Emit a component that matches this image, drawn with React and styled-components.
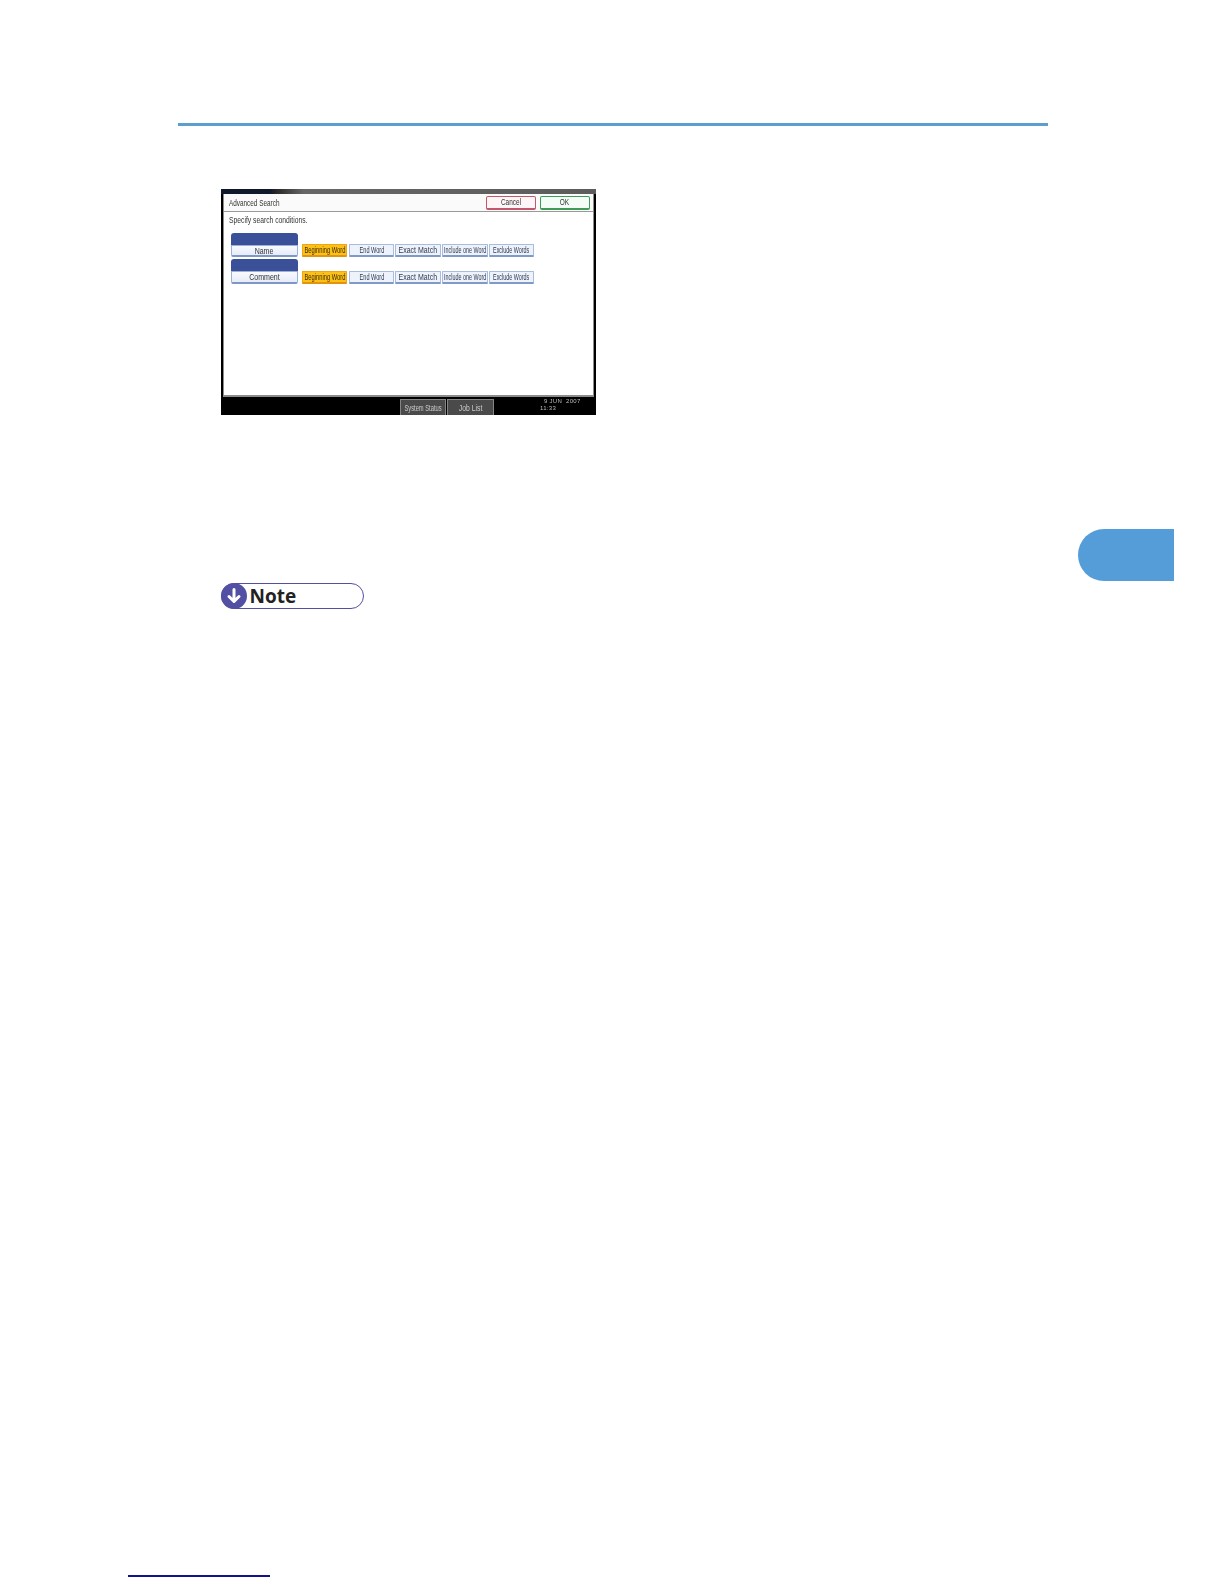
import React from "react";
import styled, { createGlobalStyle } from "styled-components";

const Global = createGlobalStyle`
  html, body { margin: 0; padding: 0; background: #fff; }
  body { font-family: "Liberation Sans", Arial, sans-serif; }
`;

const Page = styled.div`
  width: 1224px;
  height: 1584px;
  display: flex;
  flex-direction: column;
  background: #fff;
  overflow: hidden;
`;

const Rule = styled.div`
  margin: 123px 0 0 178px;
  width: 870px;
  height: 3px;
  background: #5b9fd0;
`;

const Screen = styled.div`
  margin: 63px 0 0 221px;
  width: 375px;
  height: 226px;
  background: #000;
  display: flex;
  flex-direction: column;
  filter: blur(0.4px);
`;

const TopBand = styled.div`
  height: 5px;
  flex: none;
  background: linear-gradient(90deg, #10182c 0, #10182c 13%, #2a2a2a 15%, #666 22%, #5c5c5c 100%);
`;

const Dialog = styled.div`
  flex: none;
  height: 203px;
  margin: 0 2px;
  background: #fff;
  border: 1px solid #8c8c8c;
  border-top: 0;
  border-bottom-width: 2px;
  box-sizing: border-box;
  display: flex;
  flex-direction: column;
`;

const TitleBar = styled.div`
  height: 18px;
  flex: none;
  box-sizing: border-box;
  border-bottom: 1px solid #9a9a9a;
  background: #fafafa;
  display: flex;
  align-items: center;
  justify-content: space-between;
  padding: 0 3px 0 5px;
`;

const Squeezed = styled.span`
  display: inline-block;
  white-space: nowrap;
  transform: scaleX(${p => p.$x});
  transform-origin: ${p => p.$origin || "center"};
`;

const Title = styled.span`
  font-size: 9px;
  color: #333;
`;

const Actions = styled.div`
  display: flex;
  gap: 4px;
`;

const ActionButton = styled.div`
  width: 50px;
  height: 14px;
  box-sizing: border-box;
  border: 1px solid ${p => p.$edge};
  border-bottom-width: 2px;
  border-radius: 2px;
  background: ${p => p.$fill};
  font-size: 9px;
  color: #333;
  display: flex;
  align-items: center;
  justify-content: center;
`;

const Hint = styled.div`
  margin: 4px 0 0 5px;
  font-size: 9px;
  line-height: 9px;
  color: #333;
`;

const Rows = styled.div`
  margin: 8px 0 0 7px;
  display: flex;
  flex-direction: column;
  gap: 2px;
`;

const Row = styled.div`
  display: flex;
  align-items: flex-end;
`;

const Field = styled.div`
  width: 67px;
  margin-right: 4px;
  display: flex;
  flex-direction: column;
`;

const FieldHead = styled.div`
  height: 12px;
  background: #3a5199;
  border-radius: 3px 3px 0 0;
`;

const FieldValue = styled.div`
  height: ${p => p.$h}px;
  box-sizing: border-box;
  background: linear-gradient(#f8fafe, #e6ecf8);
  border: 1px solid #9db0d6;
  border-bottom: 2px solid #7f97c6;
  border-radius: 0 0 2px 2px;
  font-size: 9px;
  color: #333;
  display: flex;
  align-items: center;
  justify-content: center;
`;

const Options = styled.div`
  display: flex;
  gap: 1px;
`;

const Option = styled.div`
  width: ${p => p.$w}px;
  height: 13px;
  margin-right: ${p => p.$gap || 0}px;
  box-sizing: border-box;
  border: 1px solid ${p => (p.$active ? "#eda51a" : "#a9bcdd")};
  border-bottom: 2px solid ${p => (p.$active ? "#e09410" : "#7f9ac8")};
  border-radius: 1px;
  background: ${p => (p.$active ? "#fdc016" : "#eef3fb")};
  font-size: 9px;
  color: ${p => (p.$active ? "#3a2a05" : "#2f3a50")};
  display: flex;
  align-items: center;
  justify-content: center;
`;

const StatusBar = styled.div`
  flex: 1;
  display: flex;
  align-items: flex-end;
  padding-left: 179px;
`;

const StatusButton = styled.div`
  width: ${p => p.$w}px;
  height: 16px;
  margin-right: 1px;
  box-sizing: border-box;
  background: #4a4a4a;
  border: 1px solid #858585;
  border-bottom: 0;
  font-size: 9px;
  color: #ccc;
  display: flex;
  align-items: center;
  justify-content: center;
`;

const Clock = styled.div`
  margin: 0 0 3px 45px;
  color: #bbb;
  font-size: 6px;
  line-height: 7px;
  letter-spacing: 0.3px;
  white-space: pre;
`;

const SectionTab = styled.div`
  align-self: flex-end;
  margin: 114px 50px 0 0;
  width: 96px;
  height: 52px;
  background: #559dd9;
  border-radius: 26px 0 0 26px;
`;

const NotePill = styled.div`
  margin: 2px 0 0 221px;
  width: 143px;
  height: 26px;
  box-sizing: border-box;
  border: 1.5px solid #5350a4;
  border-radius: 13px;
  display: flex;
  align-items: center;
  background: #fff;
`;

const NoteIcon = styled.svg`
  width: 26px;
  height: 26px;
  margin-left: -1.5px;
  flex: none;
`;

const NoteLabel = styled.span`
  margin-left: 3px;
  font-family: "Open Sans", "Liberation Sans", sans-serif;
  font-weight: 700;
  font-size: 19px;
  line-height: 22px;
  color: #222;
`;

const FootLine = styled.div`
  margin: 966px 0 0 128px;
  width: 142px;
  height: 1.5px;
  background: #12128a;
`;

const options = [
  { label: "Beginning Word", w: 45, active: true, gap: 1, x: 0.64 },
  { label: "End Word", w: 45, x: 0.62 },
  { label: "Exact Match", w: 46, x: 0.78 },
  { label: "Include one Word", w: 46, x: 0.6 },
  { label: "Exclude Words", w: 45, x: 0.6 },
];

function SearchRow({ name, valueHeight }) {
  return (
    <Row>
      <Field>
        <FieldHead />
        <FieldValue $h={valueHeight}>
          <Squeezed $x={0.78}>{name}</Squeezed>
        </FieldValue>
      </Field>
      <Options>
        {options.map(o => (
          <Option key={o.label} $w={o.w} $active={o.active} $gap={o.gap}>
            <Squeezed $x={o.x}>{o.label}</Squeezed>
          </Option>
        ))}
      </Options>
    </Row>
  );
}

export default function App() {
  return (
    <Page>
      <Global />
      <Rule />
      <Screen>
        <TopBand />
        <Dialog>
          <TitleBar>
            <Title>
              <Squeezed $x={0.71} $origin="left">Advanced Search</Squeezed>
            </Title>
            <Actions>
              <ActionButton $edge="#c2566a" $fill="#fdf5f6">
                <Squeezed $x={0.72}>Cancel</Squeezed>
              </ActionButton>
              <ActionButton $edge="#3f9a58" $fill="#f5fcf7">
                <Squeezed $x={0.72}>OK</Squeezed>
              </ActionButton>
            </Actions>
          </TitleBar>
          <Hint>
            <Squeezed $x={0.75} $origin="left">Specify search conditions.</Squeezed>
          </Hint>
          <Rows>
            <SearchRow name="Name" valueHeight={12} />
            <SearchRow name="Comment" valueHeight={13} />
          </Rows>
        </Dialog>
        <StatusBar>
          <StatusButton $w={46}>
            <Squeezed $x={0.64}>System Status</Squeezed>
          </StatusButton>
          <StatusButton $w={47}>
            <Squeezed $x={0.76}>Job List</Squeezed>
          </StatusButton>
          <Clock>{"  9 JUN  2007\n11:33"}</Clock>
        </StatusBar>
      </Screen>
      <SectionTab />
      <NotePill>
        <NoteIcon viewBox="0 0 26 26">
          <circle cx="13" cy="13" r="13" fill="#5350a4" />
          <path d="M13 6.5V18M8 13.5l5 5 5-5" fill="none" stroke="#fff" strokeWidth="3" strokeLinecap="round" strokeLinejoin="round" />
        </NoteIcon>
        <NoteLabel>Note</NoteLabel>
      </NotePill>
      <FootLine />
    </Page>
  );
}
